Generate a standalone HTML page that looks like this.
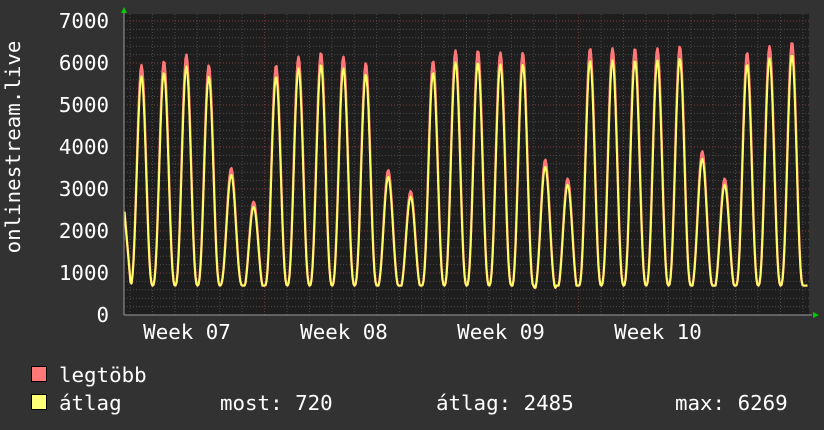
<!DOCTYPE html>
<html><head><meta charset="utf-8"><style>
html,body{margin:0;padding:0;background:#323232;}
svg{display:block}
text{font-family:"DejaVu Sans Mono","Liberation Mono",monospace;fill:#fff;font-size:20.8px}
</style></head><body>
<svg id="s" width="824" height="430" xmlns="http://www.w3.org/2000/svg">
<rect width="824" height="430" fill="#323232"/>
<rect x="124" y="14" width="685" height="301" fill="#1e1e1e"/>
<g id="grid"></g>
<path id="red" fill="none" stroke="#ff7777" stroke-width="2.4" stroke-linejoin="round"/>
<path id="yel" fill="none" stroke="#ffff66" stroke-width="2" stroke-linejoin="round"/>
<line x1="124" y1="315" x2="812" y2="315" stroke="#999" stroke-width="1"/>
<line x1="124" y1="12" x2="124" y2="315" stroke="#999" stroke-width="1"/>
<polygon points="121,13 127,13 124,7" fill="#00cc00"/>
<polygon points="813,312 813,318 819,315" fill="#00cc00"/>
<g text-anchor="end">
<text x="109" y="28">7000</text><text x="109" y="70">6000</text><text x="109" y="112">5000</text>
<text x="109" y="154">4000</text><text x="109" y="196">3000</text><text x="109" y="238">2000</text>
<text x="109" y="280">1000</text><text x="109" y="322">0</text>
</g>
<g text-anchor="middle">
<text x="187" y="339">Week 07</text><text x="344" y="339">Week 08</text>
<text x="501" y="339">Week 09</text><text x="658" y="339">Week 10</text>
</g>
<text transform="translate(20,147) rotate(-90)" text-anchor="middle">onlinestream.live</text>
<rect x="31.5" y="366.5" width="15" height="15" fill="#ff7777" stroke="#000"/>
<rect x="31.5" y="394.5" width="15" height="15" fill="#ffff77" stroke="#000"/>
<text x="59" y="382">legtöbb</text>
<text x="59" y="410">átlag</text>
<text x="220" y="410">most: 720</text>
<text x="436" y="410">átlag: 2485</text>
<text x="675" y="410">max: 6269</text>
</svg>
<script>
(function(){
var g=document.getElementById('grid'),h='';
function Y(v){return 315-v*0.042;}
for(var v=200;v<=7000;v+=200){var y=Y(v);var maj=v%1000==0;
h+='<line x1="124" x2="809" y1="'+y+'" y2="'+y+'" stroke="'+(maj?'#7a3a3a':'#4a4a4a')+'" stroke-dasharray="1,2"/>';}
var day=22.43;
for(var x=130;x<809;x+=day){var wk=false;
[266,423,580,737].forEach(function(w){if(Math.abs(w-x)<3)wk=true;});
h+='<line y1="14" y2="315" x1="'+x.toFixed(1)+'" x2="'+x.toFixed(1)+'" stroke="'+(wk?'#7a3a3a':'#4a4a4a')+'" stroke-dasharray="1,2"/>';}
g.innerHTML=h;
var pk=[5950,6050,6200,5950,3500,2700,5950,6150,6250,6150,6000,3450,2950,6050,6300,6300,6250,6250,3700,3250,6350,6350,6350,6350,6400,3900,3250,6250,6400,6500];
var lo=[700,700,700,700,700,550,700,700,700,700,700,650,600,700,700,700,700,650,600,550,700,700,700,700,700,650,600,700,700,700];
var p0=141.5;
function val(x,scale){
 var i=Math.round((x-p0)/day);var best=0;
 for(var k=Math.max(0,i-1);k<=Math.min(pk.length-1,i+1);k++){
  var d=(x-(p0+k*day))/day;
  var f=Math.pow(Math.cos(Math.PI*Math.max(-0.5,Math.min(0.5,d))),2.6);
  var b=lo[k];var v=b+(pk[k]*scale-b)*f;
  if(v>best)best=v;}
 if(x<p0-day*0.35){best=Math.max(best,2600-(x-124)*280);}
 return best;}
var r='',yy='';
for(var x=124.5;x<=808;x+=1){
 var vr=val(x,1),vy=val(x,0.955);
 r+=(x==124.5?'M':'L')+x+','+Y(vr).toFixed(1);
 yy+=(x==124.5?'M':'L')+x+','+Y(vy).toFixed(1);}
document.getElementById('red').setAttribute('d',r);
document.getElementById('yel').setAttribute('d',yy);
})();
</script>
</body></html>
